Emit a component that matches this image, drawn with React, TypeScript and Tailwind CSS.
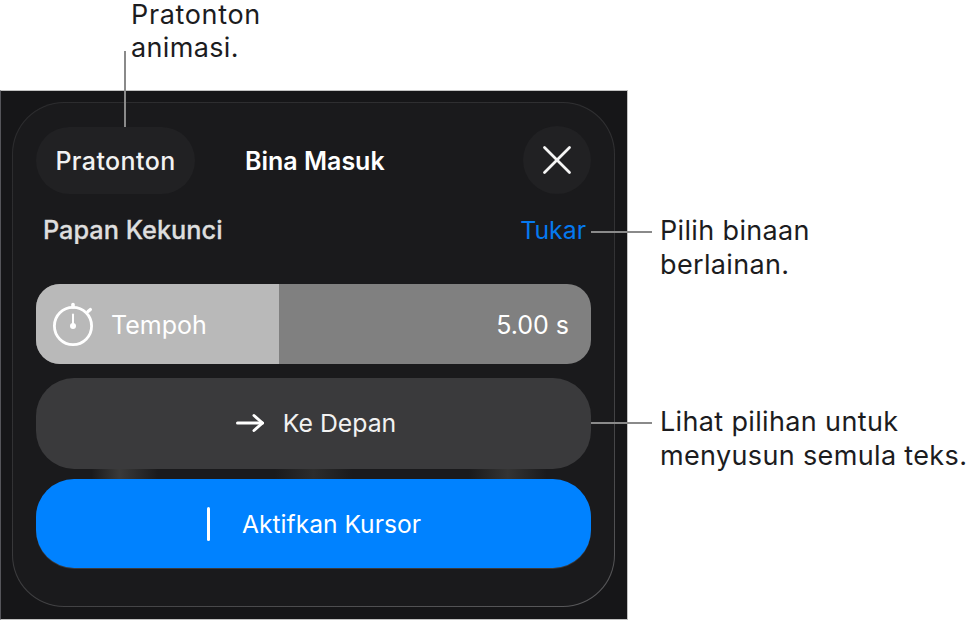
function Stopwatch() {
  return (
    <svg width="42" height="44" viewBox="0 0 42 44" fill="none" stroke="white" strokeLinecap="round">
      <circle cx="21" cy="24" r="18.6" strokeWidth="2.8" />
      <path d="M21 2.5v2.5" strokeWidth="3.6" />
      <path d="M36 9.5l2.4 -2" strokeWidth="3.2" />
      <path d="M21 12.5v11" strokeWidth="2" />
      <circle cx="21" cy="24" r="3" fill="white" stroke="none" />
    </svg>
  )
}

function ArrowRight() {
  return (
    <svg width="28" height="20" viewBox="0 0 28 20" fill="none" stroke="white" strokeWidth="3" strokeLinecap="round" strokeLinejoin="round">
      <path d="M1.5 10h25" />
      <path d="M18 2.5l8.5 7.5-8.5 7.5" />
    </svg>
  )
}

function Close() {
  return (
    <svg width="30" height="30" viewBox="0 0 30 30" fill="none" stroke="#f5f5f5" strokeWidth="2.8" strokeLinecap="round">
      <path d="M2.5 2.5l25 25" />
      <path d="M27.5 2.5l-25 25" />
    </svg>
  )
}

export default function App() {
  return (
    <div className="relative h-[620px] w-[974px] overflow-hidden bg-white font-['Inter','Liberation_Sans',sans-serif] text-[27px] leading-[34px] tracking-[0.35px] text-[#1c1c1e]">
      {/* callouts */}
      <div className="absolute left-[131px] top-0">
        <div className="h-[29px] leading-[29px] tracking-[0.65px]">Pratonton</div>
        <div className="mt-[2px]">animasi.</div>
      </div>
      <div className="absolute left-[124px] top-[51px] h-[76px] w-[2px] bg-[#8a8a8a]" />

      <div className="absolute left-[660px] top-[214px]">
        Pilih binaan
        <br />
        berlainan.
      </div>
      <div className="absolute left-[591px] top-[231px] h-[2px] w-[61px] bg-[#8a8a8a]" />

      <div className="absolute left-[660px] top-[405px]">
        Lihat pilihan untuk
        <br />
        menyusun semula teks.
      </div>
      <div className="absolute left-[591px] top-[422px] h-[2px] w-[61px] bg-[#8a8a8a]" />

      {/* panel */}
      <div className="mt-[90px] h-[530px] w-[628px] border border-[#c2c2c2] border-l-[#55555a] bg-[#161618] pl-[11px] pt-[11px] tracking-normal">
        <div className="flex h-[505px] w-[603px] flex-col rounded-[52px] border-[1.5px] border-transparent [background:linear-gradient(#1a1a1c,#1a1a1c)_padding-box,linear-gradient(160deg,#2c2c2e_0%,#333335_55%,#5a5a5c_100%)_border-box] px-[23px] pt-[23px]">
          <div className="flex h-[68px] items-center">
            <div className="flex h-[67px] w-[159px] items-center justify-center rounded-full bg-[#212123] pt-[2px] text-[25px] font-medium tracking-[0.4px] text-[#f2f2f2]">
              Pratonton
            </div>
            <div className="ml-[50px] pt-[2px] text-[25px] font-semibold text-white">Bina Masuk</div>
            <div className="ml-auto flex h-[68px] w-[68px] items-center justify-center rounded-full bg-[#212123]">
              <Close />
            </div>
          </div>

          <div className="mt-[19px] flex items-center justify-between pl-[7px] pr-[5px]">
            <span className="text-[25.3px] font-medium text-[#dedede] [-webkit-text-stroke:0.3px_#dedede]">Papan Kekunci</span>
            <span className="text-[24.8px] leading-[32px] text-[#0579f0]">Tukar</span>
          </div>

          <div className="mt-[37px] flex h-[80px] overflow-hidden rounded-[24px] bg-[#808080] text-[25px] text-white">
            <div className="flex w-[243px] items-center gap-[17px] bg-[#b9b9b9] pl-[16px]">
              <Stopwatch />
              <span className="pt-[1px]">Tempoh</span>
            </div>
            <div className="flex flex-1 items-center justify-end pr-[22px] pt-[1px]">5.00 s</div>
          </div>

          <div className="mt-[14px] flex h-[91px] items-center justify-center gap-[19px] rounded-[38px] bg-[#3a3a3c] pb-[2px] pl-[5px] text-[24.8px] text-[#f2f2f2]">
            <ArrowRight />
            <span>Ke Depan</span>
          </div>

          <div className="h-[10px] bg-[linear-gradient(90deg,#1a1a1c_10%,#3a3a3a_15%,#1a1a1c_22%,#1a1a1c_43%,#2c2c2c_50%,#1a1a1c_57%,#1a1a1c_78%,#343434_85%,#1a1a1c_92%)]" />

          <div className="flex h-[89px] items-center justify-center gap-[32px] rounded-[38px] bg-[#0082ff] pl-[1px] text-[24.6px] text-white shadow-[0_1px_0_#3a3a3c]">
            <div className="h-[34px] w-[3px] rounded-full bg-white" />
            <span>Aktifkan Kursor</span>
          </div>
        </div>
      </div>
    </div>
  )
}
